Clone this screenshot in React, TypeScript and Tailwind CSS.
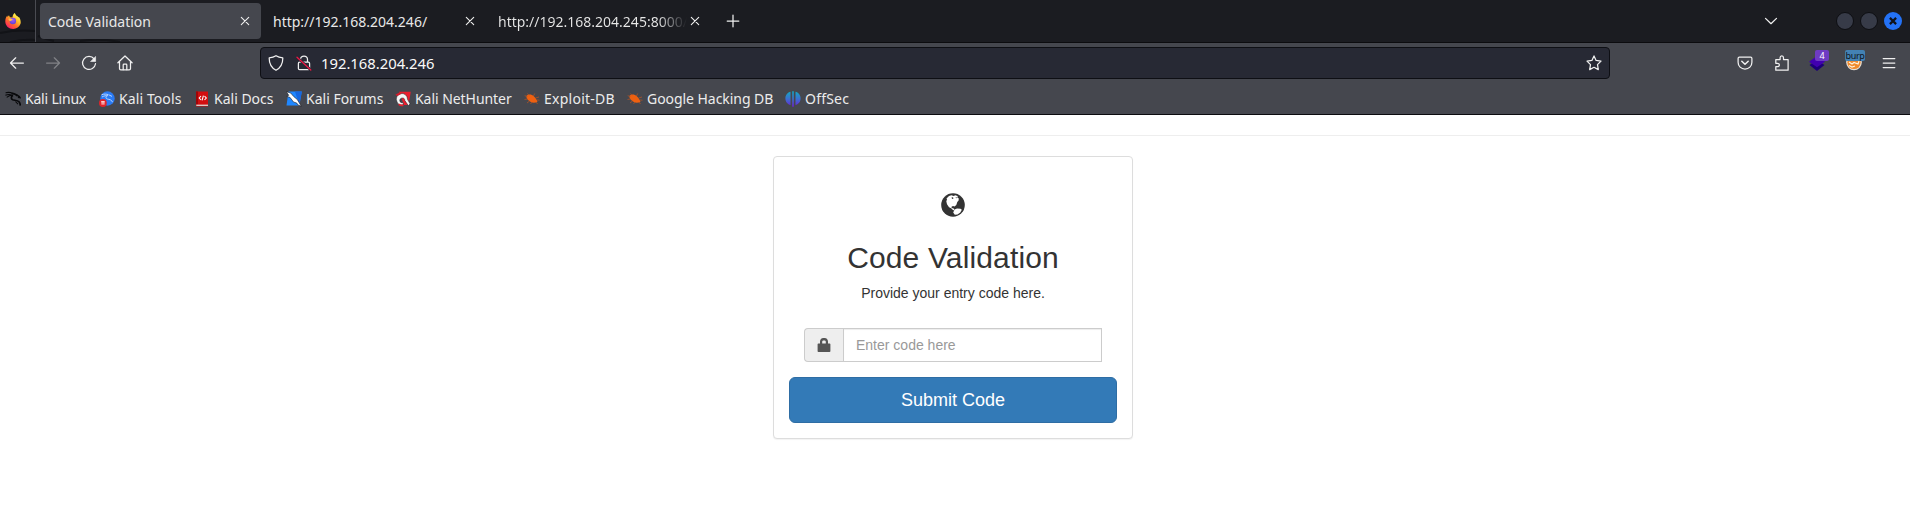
import type { ReactNode } from "react";

const uiFont = "font-['Noto_Sans','Open_Sans',sans-serif]";
const pageFont = "font-['Liberation_Sans',Arial,sans-serif]";

function Stroke({ children, className = "" }: { children: ReactNode; className?: string }) {
  return (
    <svg
      viewBox="0 0 16 16"
      className={`block size-4 shrink-0 fill-none stroke-[#f0f0f0] ${className}`}
      strokeWidth="1.25"
      strokeLinecap="round"
      strokeLinejoin="round"
    >
      {children}
    </svg>
  );
}

function CloseIcon({ className = "" }: { className?: string }) {
  return (
    <Stroke className={className}>
      <path d="M4.300 4.300l7.400 7.400M11.700 4.300l-7.400 7.400" strokeWidth="1.100" />
    </Stroke>
  );
}

function FirefoxLogo() {
  return (
    <svg viewBox="0 0 16 16" className="block size-4 shrink-0">
      <defs>
        <linearGradient id="flame" x1="0.85" y1="0.05" x2="0.2" y2="0.95">
          <stop offset="0.1" stopColor="#fff44f" />
          <stop offset="0.4" stopColor="#ffb529" />
          <stop offset="0.65" stopColor="#ff6a2d" />
          <stop offset="0.88" stopColor="#ff3750" />
          <stop offset="1" stopColor="#f0207c" />
        </linearGradient>
        <radialGradient id="core" cx="0.5" cy="0.35" r="0.7">
          <stop offset="0" stopColor="#a25bf5" />
          <stop offset="1" stopColor="#5a3fd6" />
        </radialGradient>
      </defs>
      <path
        fill="url(#flame)"
        d="M9.6 0c.9 1 1.200 2 2 2.800C12.700 3.200 13 4 13.300 4.600l.5-.8c1.600 2.200 2.400 5 1.600 7.300C14.400 14.100 11.500 16 8.200 16 3.800 16 .5 12.900.3 8.800.2 6.300 1 4.100 2.300 2.600l.2 1.500L4 2.300l.9 1.900 2.600.2C7.600 2.500 8.500.9 9.600 0z"
      />
      <circle cx="7.900" cy="8" r="3.200" fill="url(#core)" />
      <path fill="#ffbd4f" d="M3.300 6.100c1.500-1 2.800-.2 4.500.1-.3 1.200-2 1.200-2.400 2.100-.9-.3-1.600-1.100-2.100-2.200z" />
    </svg>
  );
}

function KaliLinuxIcon() {
  return (
    <svg viewBox="0 0 16 16" className="block size-4 shrink-0 fill-none stroke-[#08090b]">
      <path d="M.6 1.700c2.400-.6 5-.4 7.200.7M.4 4.200c2.100-.9 4.200-1 6.300-.3M1.700 6.300C3.500 4.800 5.600 4.200 8 4.300" strokeWidth="1.100" />
      <path d="M6.600 2.300c3 .3 4.900 1.300 5.800 2.600M8 4.400C6 5.700 5.700 8 7.700 8.800c2 .7 4.700.2 6.300 2 .9 1 1.200 2.300 1.300 3.800" strokeWidth="1.700" />
      <path d="M11.600 3.900l2.700 1.600.6 1.100-2-.3" strokeWidth="1.500" />
      <path d="M10.500 10.500l2.500 2.700" strokeWidth="1.100" />
    </svg>
  );
}

function KaliToolsIcon() {
  return (
    <svg viewBox="0 0 16 16" className="block size-4 shrink-0">
      <circle cx="8.500" cy="7.500" r="7.200" fill="#2a7af3" />
      <g fill="none" stroke="#b5d4ff" strokeWidth="1">
        <path d="M2.500 3.800c2.500-1 5-.9 7.100 0M3 6c1.900-1.100 4-1.500 6-1.300M8.200 4.700c-1.700 1-1.600 2.700.1 3.300 2 .6 4.200.4 5.300 3.200M10 3.900l3 1.500" />
      </g>
      <circle cx="3.900" cy="12" r="3.900" fill="#e0242b" />
      <path d="M2.200 10.700h3.500M3.100 10.700v3M4.900 10.700v3" stroke="#fff" strokeWidth=".9" />
    </svg>
  );
}

function KaliDocsIcon() {
  return (
    <svg viewBox="0 0 16 16" className="block size-4 shrink-0">
      <path d="M2 .5h12v15H2z" fill="#d20e10" />
      <path d="M2 .5h2v13H2z" fill="#a00507" />
      <path d="M2.300 13.600H14V15H2.300z" fill="#d9c9c4" />
      <path d="M7 5L5.200 7l1.800 2M10.500 5l1.800 2-1.800 2M9.400 4.600L8.100 9.400" fill="none" stroke="#fff" strokeWidth="1.100" />
    </svg>
  );
}

function KaliForumsIcon() {
  return (
    <svg viewBox="0 0 16 16" className="block size-4 shrink-0">
      <path d="M2.500.5h13.300L13.300 14.500H.5z" fill="#1f87ff" />
      <path d="M9 .5h6.800l-2.500 14z" fill="#1667e0" />
      <path d="M.2.700L4.700 2l3 3.500 3.600 3 4 6.800-3.300-1.300-1.300-2-3.200-1L4.100 6.500.8 5.300l2-1z" fill="#fff" stroke="#15181d" strokeWidth=".6" />
    </svg>
  );
}

function NetHunterIcon() {
  return (
    <svg viewBox="0 0 16 16" className="block size-4 shrink-0">
      <path d="M4 .7h11.800L13.500 14H9z" fill="#e91e2e" />
      <path d="M2 10.800a5.600 5.600 0 1 1 10.500-2.500l2.500 4.500-1.500 2-3.700-5.300c0-1.700-1-2.500-2.400-2.500-1.800 0-2.800 1.400-2.600 2.900.2 1.400 1.500 2 3.200 1.700l.5 2C5.500 14.700 3 13.600 2 10.800z" fill="#f6f6f6" stroke="#15181d" strokeWidth=".5" />
      <path d="M.3 3.700l4-2.200 2.400 1.300L2.400 5z" fill="#d61b2b" />
      <path d="M4 12.400c1.100 1 2.500 1.300 4.300.9l.3 1.700c-2 .5-3.900.1-5.300-1z" fill="#e91e2e" />
    </svg>
  );
}

function BugIcon() {
  return (
    <svg viewBox="0 0 16 16" className="block size-4 shrink-0">
      <path d="M2.500 5C4.300 2.800 7.600 3.200 9.800 5.200c1.700 1.500 3 3.200 3.700 5.600-2.300 1.300-5 1.300-7.100-.1C4 9.200 2 7.500 2.500 5z" fill="#ee6010" />
      <path d="M3.500 5.500L.7 4.700M3.500 8L.5 8.500M5.500 10L3 12M8 11l-1.500 2M9.500 5l1.200-2.500M11.500 7l3.500-1M13 9l2.500.2M12 11l1.500 2M5 4.300L3.500 2.500" stroke="#b95522" strokeWidth=".7" fill="none" />
    </svg>
  );
}

function OffSecIcon() {
  return (
    <svg viewBox="0 0 16 16" className="block size-4 shrink-0">
      <defs>
        <linearGradient id="offsec" x1="0" y1="0" x2="0" y2="1">
          <stop offset="0" stopColor="#12a9c4" />
          <stop offset="0.5" stopColor="#3c6fd0" />
          <stop offset="1" stopColor="#6a1fd6" />
        </linearGradient>
      </defs>
      <path
        fill="url(#offsec)"
        d="M5.500.8v13.100C2.700 13.300.4 10.800.4 7.400S2.700 1.500 5.500.8zM7.200.3h1.600v15.500H7.200zM10.500.8c2.800.7 5.100 3.200 5.100 6.600s-2.300 5.900-5.100 6.500z"
      />
    </svg>
  );
}

const bookmarks = [
  { label: "Kali Linux", icon: <KaliLinuxIcon />, box: "w-[94px]", text: "tracking-[-0.2px]" },
  { label: "Kali Tools", icon: <KaliToolsIcon />, box: "w-[95px]", text: "tracking-[0.1px]" },
  { label: "Kali Docs", icon: <KaliDocsIcon />, box: "w-[92px]", text: "" },
  { label: "Kali Forums", icon: <KaliForumsIcon />, box: "w-[109px]", text: "" },
  { label: "Kali NetHunter", icon: <NetHunterIcon />, box: "w-[129px]", text: "tracking-[-0.05px]" },
  { label: "Exploit-DB", icon: <BugIcon />, box: "w-[103px]", text: "tracking-[0.25px]" },
  { label: "Google Hacking DB", icon: <BugIcon />, box: "w-[158px]", text: "tracking-[-0.05px]" },
  { label: "OffSec", icon: <OffSecIcon />, box: "w-[80px]", text: "tracking-[0.2px]" },
];

function TabStrip() {
  return (
    <div className="relative flex h-[43px] items-center border-b border-[#0c0c0f] bg-[#1b1c21] text-sm text-[#e8e8e8]">
      <svg viewBox="0 0 140 42" className="absolute left-0 top-0 h-[42px] w-[140px] fill-none stroke-[#121317]" strokeWidth="2">
        <path d="M0 33c12-2.500 24-3 35-2M10 42c9-2 17-2.500 26-2M38 36c5 2 10 3.500 16 5M80 41c15-2 28-1.500 40 1" />
      </svg>
      <div className="relative flex h-full w-9 items-center border-r border-[#4a4b52] pl-[5px]">
        <FirefoxLogo />
      </div>
      <div className="relative ml-1 flex h-9 w-[221px] items-center rounded-[4px] bg-[#45474e] pl-2 pr-2">
        <span className="flex-1 pt-px">Code Validation</span>
        <CloseIcon />
      </div>
      <div className="ml-1 flex h-9 w-[221px] items-center pl-2 pr-2">
        <span className="flex-1 pt-px">http://192.168.204.246/</span>
        <CloseIcon />
      </div>
      <div className="ml-1 flex h-9 w-[221px] items-center pl-2 pr-2">
        <span className="w-[189px] overflow-hidden whitespace-nowrap bg-linear-to-r from-[#e8e8e8] from-85% to-[#1b1c21] bg-clip-text pt-px text-transparent">
          http://192.168.204.245:8000/
        </span>
        <CloseIcon />
      </div>
      <Stroke className="ml-[14px]">
        <path d="M8 2.200v11.600M2.200 8h11.600" />
      </Stroke>
      <Stroke className="ml-auto">
        <path d="M2.500 5.400L8 10.700l5.500-5.300" />
      </Stroke>
      <div className="ml-[57px] mr-2 flex gap-[6px]">
        <span className="size-[18px] rounded-full border border-[#0d0e12] bg-[#373b48]" />
        <span className="size-[18px] rounded-full border border-[#0d0e12] bg-[#373b48]" />
        <span className="flex size-[18px] items-center justify-center rounded-full bg-[#2472f6]">
          <svg viewBox="0 0 8 8" className="size-2">
            <path d="M.9.900l6.200 6.200M7.100.900L.9 7.100" stroke="#101219" strokeWidth="2.200" />
          </svg>
        </span>
      </div>
    </div>
  );
}

function NavBar() {
  return (
    <div className="flex h-10 items-center">
      <Stroke className="ml-[9px]">
        <path d="M14.400 8H1.600M6.700 2.800L1.500 8l5.200 5.200" />
      </Stroke>
      <Stroke className="ml-5 opacity-35">
        <path d="M1.600 8h12.800M9.300 2.800L14.500 8l-5.200 5.200" />
      </Stroke>
      <Stroke className="ml-5">
        <path d="M13.200 4A6.500 6.500 0 1 0 14.500 8.700" />
        <path d="M14.600 1.800v4.700H9.900z" fill="#f0f0f0" strokeWidth=".6" />
      </Stroke>
      <Stroke className="ml-5">
        <path d="M.9 7.800L8 1l7.100 6.800M2.500 6.800v6.700c0 .8.500 1.400 1.300 1.400h8.400c.8 0 1.300-.6 1.300-1.400V6.800" />
        <path d="M6.200 14.700V10c0-.5.300-.8.800-.8h2c.5 0 .8.300.8.800v4.700" />
      </Stroke>
      <div className="ml-[127px] flex h-8 w-[1350px] items-center rounded-[4px] border border-[#0e0f14] bg-[#272934] pl-[7px] pr-[7px]">
        <Stroke>
          <path d="M8 .7c2 1.300 4.200 1.900 6.800 2.200.1 5.300-1.600 9.700-6.800 12.400C2.800 12.600 1.100 8.200 1.200 2.900 3.800 2.600 6 2 8 .7z" />
        </Stroke>
        <Stroke className="ml-3">
          <path d="M4.500 7V4.500a3.500 3.500 0 0 1 7 0V7M3.600 7.200h8.800c.7 0 1.200.5 1.200 1.200v5c0 .7-.5 1.200-1.200 1.200H3.600c-.7 0-1.200-.5-1.200-1.200v-5c0-.7.5-1.200 1.200-1.200z" />
          <path d="M1 2.200L14.800 15" stroke="#272934" strokeWidth="2.600" />
          <path d="M1 2.200L14.800 15" stroke="#ee1744" strokeWidth="1.300" />
        </Stroke>
        <span className="ml-[9px] flex-1 text-[14.8px] text-[#fafafa]">192.168.204.246</span>
        <Stroke>
          <path d="M8 .9l2.100 4.500 4.900.7-3.500 3.500.8 5L8 12.300l-4.300 2.300.8-5L1 6.100l4.900-.7z" />
        </Stroke>
      </div>
      <Stroke className="ml-[127px]">
        <path d="M2.400 2.200h11.200c.8 0 1.300.5 1.300 1.300v3.700c0 4-3 6.800-6.900 6.800S1.100 11.200 1.100 7.200V3.500c0-.8.500-1.300 1.300-1.300z" />
        <path d="M4.800 6.200L8 9.300l3.200-3.100" strokeWidth="1.500" />
      </Stroke>
      <Stroke className="ml-[21px]">
        <path d="M1.800 4.600h4.300V2.700c0-1.100.7-1.900 1.700-1.900s1.700.8 1.700 1.900v1.900h4.600v10.600H1.800v-3.500h1.700c1.100 0 1.900-.7 1.900-1.700s-.8-1.700-1.900-1.700H1.800z" />
      </Stroke>
      <div className="relative ml-[18px] h-5 w-5 shrink-0">
        <svg viewBox="0 0 20 20" className="block size-5">
          <path d="M1.500 12L9 7l7.500 5L9 18z" fill="#1c0078" />
          <path d="M1 8.700L9 3l8 5.700-8 5.500z" fill="#4100b0" />
        </svg>
        <span className="absolute -top-[3px] left-[7px] flex h-[11px] w-[14px] items-center justify-center rounded-[2px] bg-[#6e3bc3] text-[9px] leading-none text-white">
          4
        </span>
      </div>
      <div className="relative ml-[17px] h-5 w-5 shrink-0">
        <svg viewBox="0 0 20 20" className="block size-5">
          <circle cx="9" cy="9.500" r="7.800" fill="#e8e2d8" />
          <circle cx="9" cy="9.500" r="6.600" fill="#f08a2c" />
          <path d="M4 9l3 2 2-1.500 4 1.500 1-3M4 12.500l3 1.500 3-1" stroke="#fff1dc" strokeWidth="1.200" fill="none" />
        </svg>
        <span className="absolute -top-[3px] left-0 flex h-[11px] w-5 items-center justify-center overflow-hidden rounded-[2px] bg-[#4382b4] text-[9px] leading-none tracking-[-0.3px] text-[#10161c]">
          burp
        </span>
      </div>
      <Stroke className="ml-4">
        <path d="M2.200 3.500h11.600M2.200 8h11.600M2.200 12.500h11.600" />
      </Stroke>
    </div>
  );
}

function BookmarksBar() {
  return (
    <div className="flex h-[31px] items-center pl-[5px] text-sm text-[#ececec]">
      {bookmarks.map((b) => (
        <div key={b.label} className={`flex shrink-0 items-center gap-1 whitespace-nowrap ${b.box}`}>
          {b.icon}
          <span className={b.text}>{b.label}</span>
        </div>
      ))}
    </div>
  );
}

function CodePanel() {
  return (
    <div className="ml-[773px] mt-5 h-[283px] w-[360px] rounded-[4px] border border-[#ddd] bg-white px-[15px] pt-[36px] text-center text-sm text-[#333] shadow-[0_1px_1px_rgba(0,0,0,0.05)]">
      <svg viewBox="0 0 24 24" className="mx-auto size-6">
        <circle cx="12" cy="12" r="11.800" fill="#333" />
        <path
          fill="#fff"
          d="M5.500 5.500L8 3l2.500-.7 2 .7 2-.8 2.300 1-.5 1.300 1.500 1-.2 2-1.300 1.500-1 3-1.800 1.500-1.500-.5-1.500.7.2 1.200 2 .5.700 1.500-1.200.3-2-2-2.200-1-2-3-.7-3 .7-1.700z"
        />
        <path fill="#fff" d="M13.500 16.500l2.500-1 3.500.3 1.300 1-1.500 2.700-2.800 2-2.700.2-1.600-2.200z" />
        <path fill="#333" d="M10.500 4.500l1.500-.3.500 1.300-1.400.5zM14.500 4l1.200.2-.3 1.300z" />
      </svg>
      <h1 className="mt-6 text-[30px] leading-[33px] tracking-[0.14px]">Code Validation</h1>
      <p className="mt-[9px] leading-5">Provide your entry code here.</p>
      <div className="mx-[15px] mt-[25px] flex h-[34px]">
        <span className="flex w-[39px] items-center justify-center rounded-l-[4px] border border-r-0 border-[#ccc] bg-[#eee]">
          <svg viewBox="0 0 14 14" className="size-[14px] fill-[#555]">
            <path d="M1.400 5.500H3V3.600C3 1.600 4.400 0 6.300 0h1.400c1.900 0 3.300 1.600 3.300 3.600v1.900h1.600c.4 0 .8.300.8.800v6.900c0 .5-.4.800-.8.800H1.400c-.5 0-.8-.3-.8-.8V6.300c0-.5.3-.8.8-.8zm3.800 0h3.600V3.800c0-.8-.5-1.400-1.200-1.400H6.400c-.7 0-1.200.6-1.200 1.400z" />
          </svg>
        </span>
        <input
          placeholder="Enter code here"
          className="h-[34px] min-w-0 flex-1 border border-[#ccc] px-3 text-sm shadow-[inset_0_1px_1px_rgba(0,0,0,0.075)] outline-none placeholder:text-[#999]"
        />
      </div>
      <button className="mt-[15px] h-[46px] w-full rounded-[6px] border border-[#2e6da4] bg-[#337ab7] text-lg text-white">
        Submit Code
      </button>
    </div>
  );
}

export default function App() {
  return (
    <div className="h-[514px] w-[1910px] overflow-hidden bg-white">
      <header className={`h-[115px] border-b border-[#0c0c0f] bg-[#45474e] ${uiFont}`}>
        <TabStrip />
        <NavBar />
        <BookmarksBar />
      </header>
      <main className={pageFont}>
        <div className="h-[21px] border-b border-[#eee]" />
        <CodePanel />
      </main>
    </div>
  );
}
